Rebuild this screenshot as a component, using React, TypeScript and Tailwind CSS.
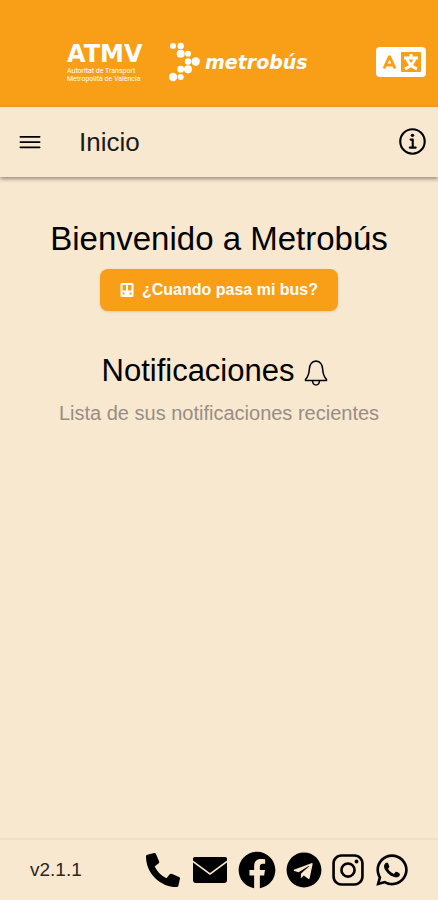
import type { ReactNode } from 'react';
import { IoInformationCircleOutline, IoLogoFacebook, IoLogoInstagram, IoMenuOutline } from 'react-icons/io5';
import { FaPhoneAlt, FaTelegram, FaWhatsapp } from 'react-icons/fa';

const CONTACT_LINKS: { label: string; href: string; icon: ReactNode }[] = [
  { label: 'Teléfono',  href: '#telefono',  icon: <FaPhoneAlt className="mr-1 size-[34px]" /> },
  { label: 'Correo',    href: '#correo',    icon: <MailIcon /> },
  { label: 'Facebook',  href: '#facebook',  icon: <IoLogoFacebook className="size-[42px]" /> },
  { label: 'Telegram',  href: '#telegram',  icon: <FaTelegram className="size-9" /> },
  { label: 'Instagram', href: '#instagram', icon: <IoLogoInstagram className="size-9" /> },
  { label: 'WhatsApp',  href: '#whatsapp',  icon: <FaWhatsapp className="size-9" /> },
];

export default function App() {
  return (
    <div className="flex min-h-screen flex-col bg-[#f9e8d0] font-['Liberation_Sans',sans-serif] text-black">
      <BrandBar />
      <Toolbar />

      <main className="flex flex-1 flex-col items-center px-4 pt-11 text-center">
        <h1 className="text-[33px] leading-9">Bienvenido a Metrobús</h1>
        <button
          type="button"
          className="mt-3 flex h-[42px] items-center gap-2 rounded-lg bg-[#f99e17] px-5 text-base font-bold text-white shadow-sm"
        >
          <BusIcon />
          ¿Cuando pasa mi bus?
        </button>

        <h2 className="mt-[42px] flex items-center gap-2.5 pr-2 text-[31px] leading-9">
          Notificaciones
          <BellIcon />
        </h2>
        <p className="mt-3 text-xl leading-6 text-[#968e86]">Lista de sus notificaciones recientes</p>
      </main>

      <Footer />
    </div>
  );
}

function BrandBar() {
  return (
    <header className="flex h-[107px] items-center bg-[#f99e17] pt-4 pr-3 pl-[67px] text-white">
      <div className="w-[102px] shrink-0">
        <div className="font-['DejaVu_Sans',sans-serif] text-2xl leading-[26px] font-bold">ATMV</div>
        <div className="font-[Roboto,sans-serif] text-[7px] leading-2">
          <div>Autoritat de Transport</div>
          <div>Metropolità de València</div>
        </div>
      </div>
      <div className="flex items-center gap-1">
        <MetrobusDots />
        <span className="font-['DejaVu_Sans',sans-serif] text-[19px] leading-6 font-bold italic">metrobús</span>
      </div>
      <button type="button" aria-label="Cambiar idioma" className="ml-auto">
        <LanguageIcon />
      </button>
    </header>
  );
}

function Toolbar() {
  return (
    <nav className="flex h-[70px] items-center pr-2 pl-4 shadow-[0_2px_4px_rgba(0,0,0,0.4)]">
      <button type="button" aria-label="Menú">
        <IoMenuOutline className="size-7" />
      </button>
      <span className="ml-[35px] text-[26px] leading-8 text-[#1c1a18]">Inicio</span>
      <button type="button" aria-label="Información" className="ml-auto">
        <IoInformationCircleOutline className="size-[34px]" />
      </button>
    </nav>
  );
}

function Footer() {
  return (
    <footer className="flex h-[62px] items-center justify-between border-t-2 border-[#f1dfc7] pr-7 pl-[30px]">
      <span className="text-[19px] leading-6 text-[#2b2723]">v2.1.1</span>
      <div className="flex items-center gap-2">
        {CONTACT_LINKS.map(({ label, href, icon }) => (
          <a key={label} href={href} aria-label={label}>
            {icon}
          </a>
        ))}
      </div>
    </footer>
  );
}

/* Arrow made of dots, part of the Metrobús logo */
function MetrobusDots() {
  return (
    <svg viewBox="0 0 32 40" className="h-10 w-8" fill="currentColor" aria-hidden="true">
      <circle cx="4" cy="4" r="3" />
      <circle cx="11.7" cy="4" r="3.2" />
      <circle cx="11.7" cy="11.7" r="4" />
      <circle cx="19" cy="11.7" r="3" />
      <circle cx="19" cy="19.5" r="3.2" />
      <circle cx="26.7" cy="19.5" r="4.2" />
      <circle cx="11.7" cy="27.2" r="3.4" />
      <circle cx="19" cy="27.2" r="4" />
      <circle cx="4" cy="35" r="4.2" />
      <circle cx="11.7" cy="35" r="3" />
    </svg>
  );
}

function LanguageIcon() {
  return (
    <svg viewBox="0 0 50 30" className="h-[30px] w-[50px]" aria-hidden="true">
      <rect width="50" height="30" rx="4" fill="#fff" />
      <path d="M8 21.5 13.2 10h.6L19 21.5M10 18h7" fill="none" stroke="#f99e17" strokeWidth="2.8" />
      <rect x="25" y="5" width="20" height="20" rx="1" fill="#f99e17" />
      <path
        d="M28 11h14M35 7v4M39 11c-1 5-5 9-10 11M31 11c1 5 5 9 10 11"
        fill="none"
        stroke="#fff"
        strokeWidth="3"
      />
    </svg>
  );
}

function BusIcon() {
  return (
    <svg viewBox="0 0 14 16" className="h-4 w-3.5" fill="currentColor" aria-hidden="true">
      <path
        fillRule="evenodd"
        d="M2 1h10a1.500 1.500 0 0 1 1.500 1.500v11A1.500 1.500 0 0 1 12 15H2A1.500 1.500 0 0 1 .5 13.500v-11A1.500 1.500 0 0 1 2 1zM2.500 3v5.500H6V3zM8 3v5.500h3.500V3zM2.500 10.500v2h2v-2zM9.500 10.500v2h2v-2z"
      />
    </svg>
  );
}

function BellIcon() {
  return (
    <svg
      viewBox="0 0 24 28"
      className="mt-1 h-7 w-6"
      fill="none"
      stroke="currentColor"
      strokeWidth="1.5"
      strokeLinejoin="round"
      aria-hidden="true"
    >
      <path d="M12 2C7.500 2.500 5.500 6 5.300 10.500 5 15.500 4.300 17.500 1.500 20.500v1h21v-1c-2.800-3-3.500-5-3.800-10C18.500 6 16.500 2.500 12 2z" />
      <path d="M8.500 22c.3 2.500 1.500 4 3.500 4s3.200-1.500 3.500-4" />
    </svg>
  );
}

function MailIcon() {
  return (
    <svg viewBox="0 0 36 28" className="h-7 w-9" fill="currentColor" aria-hidden="true">
      <path d="M1 4.500V2.500Q1 1 3 1h30q2 0 2 1.500v2L18 17z" />
      <path d="M1 6.500 18 19l17-12.500V24q0 3-3 3H4q-3 0-3-3z" />
    </svg>
  );
}
